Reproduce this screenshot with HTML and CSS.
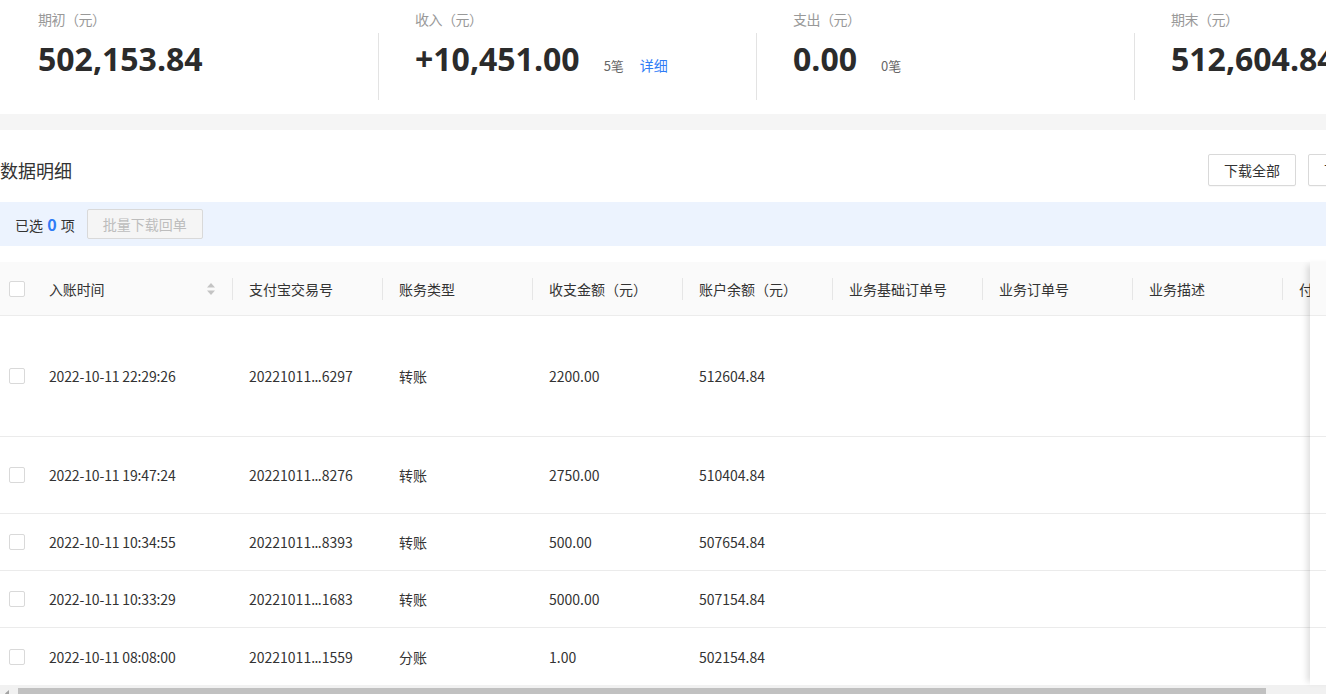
FILE: index.html
```html
<!DOCTYPE html>
<html lang="zh-CN">
<head>
<meta charset="utf-8">
<title>数据明细</title>
<link rel="stylesheet" href="styles.css">
</head>
<body>
<div class="page">
  <div class="summary">
    <div class="stat first">
      <div class="label">期初（元）</div>
      <div class="value"><span class="num">502,153.84</span></div>
    </div>
    <div class="vdiv"></div>
    <div class="stat">
      <div class="label">收入（元）</div>
      <div class="value"><span class="num">+10,451.00</span><span class="cnt">5笔</span><a class="link">详细</a></div>
    </div>
    <div class="vdiv"></div>
    <div class="stat">
      <div class="label">支出（元）</div>
      <div class="value"><span class="num">0.00</span><span class="cnt">0笔</span></div>
    </div>
    <div class="vdiv"></div>
    <div class="stat">
      <div class="label">期末（元）</div>
      <div class="value"><span class="num">512,604.84</span></div>
    </div>
  </div>
  <div class="band"></div>

  <div class="toolbar">
    <h2 class="title">数据明细</h2>
    <div class="actions">
      <button class="btn">下载全部</button>
      <button class="btn">下载筛选</button>
    </div>
  </div>

  <div class="selbar">
    <span class="sel">已选 <b>0</b> 项</span>
    <button class="btn btn-disabled">批量下载回单</button>
  </div>

  <div class="table">
    <div class="scroll">
      <div class="row head">
        <div class="cell c-chk"><span class="chk"></span></div>
        <div class="cell c-time"><span class="txt">入账时间</span>
          <svg class="sort" width="8" height="12" viewBox="0 0 8 12"><path d="M4 0 L8 4.5 L0 4.5 Z" fill="#c4c4c4"/><path d="M0 7.5 L8 7.5 L4 12 Z" fill="#c4c4c4"/></svg>
          <span class="hdiv"></span></div>
        <div class="cell c-w"><span class="txt">支付宝交易号</span><span class="hdiv"></span></div>
        <div class="cell c-w"><span class="txt">账务类型</span><span class="hdiv"></span></div>
        <div class="cell c-w"><span class="txt">收支金额（元）</span><span class="hdiv"></span></div>
        <div class="cell c-w"><span class="txt">账户余额（元）</span><span class="hdiv"></span></div>
        <div class="cell c-w"><span class="txt">业务基础订单号</span><span class="hdiv"></span></div>
        <div class="cell c-w"><span class="txt">业务订单号</span><span class="hdiv"></span></div>
        <div class="cell c-w"><span class="txt">业务描述</span><span class="hdiv"></span></div>
        <div class="cell c-w"><span class="txt">付款方信息</span><span class="hdiv"></span></div>
      </div>
      <div class="row h1">
        <div class="cell c-chk"><span class="chk"></span></div>
        <div class="cell c-time">2022-10-11 22:29:26</div>
        <div class="cell c-w">20221011<span class="dots">...</span>6297</div>
        <div class="cell c-w">转账</div>
        <div class="cell c-w">2200.00</div>
        <div class="cell c-w">512604.84</div>
        <div class="cell c-w"></div><div class="cell c-w"></div><div class="cell c-w"></div><div class="cell c-w"></div>
      </div>
      <div class="row h2">
        <div class="cell c-chk"><span class="chk"></span></div>
        <div class="cell c-time">2022-10-11 19:47:24</div>
        <div class="cell c-w">20221011<span class="dots">...</span>8276</div>
        <div class="cell c-w">转账</div>
        <div class="cell c-w">2750.00</div>
        <div class="cell c-w">510404.84</div>
        <div class="cell c-w"></div><div class="cell c-w"></div><div class="cell c-w"></div><div class="cell c-w"></div>
      </div>
      <div class="row h3">
        <div class="cell c-chk"><span class="chk"></span></div>
        <div class="cell c-time">2022-10-11 10:34:55</div>
        <div class="cell c-w">20221011<span class="dots">...</span>8393</div>
        <div class="cell c-w">转账</div>
        <div class="cell c-w">500.00</div>
        <div class="cell c-w">507654.84</div>
        <div class="cell c-w"></div><div class="cell c-w"></div><div class="cell c-w"></div><div class="cell c-w"></div>
      </div>
      <div class="row h3">
        <div class="cell c-chk"><span class="chk"></span></div>
        <div class="cell c-time">2022-10-11 10:33:29</div>
        <div class="cell c-w">20221011<span class="dots">...</span>1683</div>
        <div class="cell c-w">转账</div>
        <div class="cell c-w">5000.00</div>
        <div class="cell c-w">507154.84</div>
        <div class="cell c-w"></div><div class="cell c-w"></div><div class="cell c-w"></div><div class="cell c-w"></div>
      </div>
      <div class="row h3 last">
        <div class="cell c-chk"><span class="chk"></span></div>
        <div class="cell c-time">2022-10-11 08:08:00</div>
        <div class="cell c-w">20221011<span class="dots">...</span>1559</div>
        <div class="cell c-w">分账</div>
        <div class="cell c-w">1.00</div>
        <div class="cell c-w">502154.84</div>
        <div class="cell c-w"></div><div class="cell c-w"></div><div class="cell c-w"></div><div class="cell c-w"></div>
      </div>
    </div>
    <div class="fixed">
      <div class="row head"><div class="cell c-op"><span class="txt">操作</span></div></div>
      <div class="row h1"><div class="cell c-op"></div></div>
      <div class="row h2"><div class="cell c-op"></div></div>
      <div class="row h3"><div class="cell c-op"></div></div>
      <div class="row h3"><div class="cell c-op"></div></div>
      <div class="row h3 last"><div class="cell c-op"></div></div>
    </div>
  </div>

  <div class="hscroll">
    <div class="arrow"><svg width="17" height="17" viewBox="0 0 17 17"><path d="M5 8.5 L9 5 L9 12 Z" fill="#a3a3a3"/></svg></div>
    <div class="thumb"></div>
  </div>
</div>
</body>
</html>
```

FILE: styles.css
```css
html, body {
  margin: 0;
  padding: 0;
  background: #fff;
  overflow: hidden;
}
body {
  width: 1326px;
  height: 694px;
  font-family: "Noto Sans CJK SC", "Noto Sans", sans-serif;
  font-size: 14px;
  color: #333;
}
.page {
  width: 1430px;
}

/* summary */
.summary {
  display: flex;
  height: 114px;
  background: #fff;
}
.stat {
  flex: none;
  width: 377px;
  box-sizing: border-box;
  padding-left: 36px;
  padding-top: 10px;
}
.stat.first {
  width: 378px;
  padding-left: 38px;
}
.vdiv {
  flex: none;
  width: 1px;
  height: 67px;
  margin-top: 33px;
  background: #e3e3e3;
}
.label {
  font-size: 14px;
  line-height: 18px;
  color: #999;
  letter-spacing: -0.5px;
}
.value {
  display: flex;
  align-items: baseline;
  margin-top: 11px;
  line-height: 40px;
  white-space: nowrap;
}
.num {
  font-family: "Open Sans", "Noto Sans", sans-serif;
  font-weight: 700;
  font-size: 32px;
  color: #2b2b2b;
}
.cnt {
  font-size: 13px;
  color: #666;
  margin-left: 24px;
}
.link {
  font-size: 14px;
  color: #2f7cf6;
  margin-left: 16px;
  cursor: pointer;
}
.band {
  height: 16px;
  background: #f5f5f5;
}

/* toolbar */
.toolbar {
  display: flex;
  align-items: center;
  justify-content: space-between;
  height: 32px;
  padding: 24px 34px 16px 0;
}
.title {
  margin: 0;
  font-size: 18px;
  font-weight: 400;
  color: #333;
  line-height: 32px;
}
.actions {
  display: flex;
  gap: 12px;
}
.btn {
  font-family: inherit;
  font-size: 14px;
  color: #333;
  height: 32px;
  padding: 0 15px;
  background: #fff;
  border: 1px solid #d9d9d9;
  border-radius: 2px;
  box-shadow: 0 1px 1px rgba(0, 0, 0, 0.03);
  line-height: 30px;
  white-space: nowrap;
}

/* selection bar */
.selbar {
  display: flex;
  align-items: center;
  gap: 12px;
  height: 44px;
  padding-left: 15px;
  background: #ecf3fe;
  margin-bottom: 16px;
}
.sel b {
  color: #2f7cf6;
  font-weight: 700;
  font-size: 16px;
  margin: 0 1px;
}
.btn-disabled {
  height: 30px;
  line-height: 28px;
  background: #f5f5f5;
  color: #bdbdbd;
  box-shadow: none;
}

/* table */
.table {
  display: flex;
}
.scroll {
  flex: none;
  width: 1310px;
  overflow: hidden;
}
.row {
  display: flex;
  border-bottom: 1px solid #ebebeb;
  box-sizing: border-box;
  background: #fff;
}
.row.head {
  height: 54px;
  background: #fafafa;
  border-bottom-color: #ececec;
}
.row.h1 { height: 121px; }
.row.h2 { height: 77px; }
.row.h3 { height: 57px; }
.row.last { border-bottom: none; }

.cell {
  flex: none;
  display: flex;
  align-items: center;
  box-sizing: border-box;
  padding-left: 16px;
  white-space: nowrap;
  color: #333;
}
.c-chk {
  width: 33px;
  padding-left: 9px;
}
.c-time { width: 200px; letter-spacing: -0.15px; }
.c-w { width: 150px; }
.c-op { width: 120px; }
.dots { letter-spacing: -0.6px; margin-right: 0.6px; }
.chk {
  display: block;
  width: 16px;
  height: 16px;
  box-sizing: border-box;
  border: 1px solid #d9d9d9;
  border-radius: 2px;
  background: #fff;
}
.head .txt {
  color: #333;
}
.sort {
  display: block;
  margin-left: auto;
  margin-right: 17px;
}
.hdiv {
  display: block;
  width: 1px;
  height: 22px;
  background: #e6e6e6;
  margin-left: auto;
}
.sort + .hdiv {
  margin-left: 0;
}

.fixed {
  flex: none;
  width: 120px;
  box-shadow: -6px 0 6px -3px rgba(0, 0, 0, 0.13);
  position: relative;
  z-index: 1;
}

/* scrollbar */
.hscroll {
  display: flex;
  height: 17px;
  background: #f1f1f1;
}
.arrow {
  flex: none;
  width: 17px;
  height: 17px;
}
.arrow svg { display: block; }
.thumb {
  flex: none;
  width: 1248px;
  height: 11px;
  margin: 3px 0 0 1px;
  background: #c1c1c1;
}
```
